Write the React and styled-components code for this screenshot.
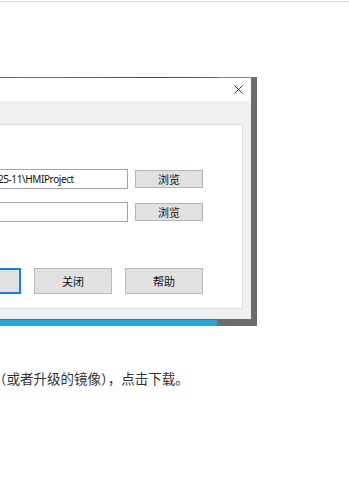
import React from "react";
import styled, { createGlobalStyle } from "styled-components";

const GlobalStyle = createGlobalStyle`
  html, body {
    margin: 0;
    padding: 0;
    background: #fff;
    overflow: hidden;
  }
  body {
    font-family: "Noto Sans CJK SC", "Noto Sans", sans-serif;
  }
`;

const App = () => {
  return (
    <Page>
      <GlobalStyle />
      <Rule />
      <Shot>
        <Dialog>
          <TitleBar>
            <CloseIcon viewBox="0 0 10 10">
              <path d="M0.5 0.5 L9.5 9.5 M9.5 0.5 L0.5 9.5" />
            </CloseIcon>
          </TitleBar>
          <Body>
            <Panel>
              <Field>
                <TextBox>D:\WinCC\2023-10-25-11\HMIProject</TextBox>
                <Button>浏览</Button>
              </Field>
              <Field>
                <TextBox />
                <Button>浏览</Button>
              </Field>
              <Actions>
                <ActionButton focused>下载</ActionButton>
                <ActionButton>关闭</ActionButton>
                <ActionButton>帮助</ActionButton>
              </Actions>
            </Panel>
          </Body>
        </Dialog>
        <Strip>
          <BehindWindow />
          <Shade />
        </Strip>
      </Shot>
      <Caption>（或者升级的镜像），点击下载。</Caption>
    </Page>
  );
};

export default App;

const Page = styled.main`
  width: 349px;
  height: 491px;
  overflow: hidden;
`;

const Rule = styled.div`
  margin-top: 1px;
  height: 1px;
  background: #d6d6d6;
`;

const Shot = styled.figure`
  margin: 75px 0 0 -149px;
  width: 406px;
`;

const Dialog = styled.div`
  width: 400px;
  border-top: 1px solid transparent;
  border-image: linear-gradient(
      to right,
      #2f5f6b 0,
      #3c7d88 200px,
      #2b4f6a 300px,
      #3d6e74 366px,
      #8a8a8a 367px,
      #8a8a8a 100%
    )
    1;
  box-shadow: 6px 0 0 #6c6c6c;
  background: #f0f0f0;
`;

const TitleBar = styled.div`
  height: 23px;
  background: #fff;
  display: flex;
  align-items: center;
  justify-content: flex-end;
  padding-right: 8px;
`;

const CloseIcon = styled.svg`
  width: 9px;
  height: 9px;
  stroke: #1a1a1a;
  stroke-width: 1;
  fill: none;
`;

const Body = styled.div`
  padding: 23px 8px 10px 0;
`;

const Panel = styled.section`
  background: #fff;
  border: 1px solid #dadada;
  border-left: none;
  padding: 44px 39px 14px 0;
  display: flex;
  flex-direction: column;
  align-items: flex-end;
`;

const Field = styled.div`
  display: flex;
  align-items: center;
  gap: 7px;
  margin-bottom: 13px;
  &:nth-child(2) {
    margin-bottom: 46px;
  }
`;

const TextBox = styled.div`
  box-sizing: border-box;
  width: 216px;
  height: 20px;
  border: 1px solid #a3a3a3;
  background: #fff;
  padding: 0 3px;
  font-family: "Noto Sans", "Liberation Sans", sans-serif;
  font-size: 10px;
  letter-spacing: -0.4px;
  line-height: 18px;
  color: #111;
  white-space: nowrap;
  overflow: hidden;
`;

const Button = styled.button`
  box-sizing: border-box;
  width: 68px;
  height: 18px;
  padding: 0;
  border: 1px solid #b4b4b4;
  background: #e1e1e1;
  font-family: "Noto Sans CJK SC", sans-serif;
  font-size: 11px;
  line-height: 16px;
  color: #111;
`;

const Actions = styled.div`
  display: flex;
  gap: 13px;
`;

const ActionButton = styled.button`
  box-sizing: border-box;
  width: 78px;
  height: 26px;
  padding: 0;
  border: ${({ focused }) => (focused ? "2px solid #1a7fd6" : "1px solid #b9b9b9")};
  background: #e1e1e1;
  font-family: "Noto Sans CJK SC", sans-serif;
  font-size: 11px;
  color: #111;
`;

const Strip = styled.div`
  display: flex;
  height: 7px;
`;

const BehindWindow = styled.div`
  flex: 0 0 366px;
  background: #2aa3d6;
  border-top: 1px solid #1f7fa8;
`;

const Shade = styled.div`
  flex: 1;
  background: #6c6c6c;
`;

const Caption = styled.p`
  margin: 42px 0 0 -7px;
  font-family: "Noto Sans CJK SC", sans-serif;
  font-size: 13.5px;
  line-height: 20px;
  color: #333;
  white-space: nowrap;
`;
